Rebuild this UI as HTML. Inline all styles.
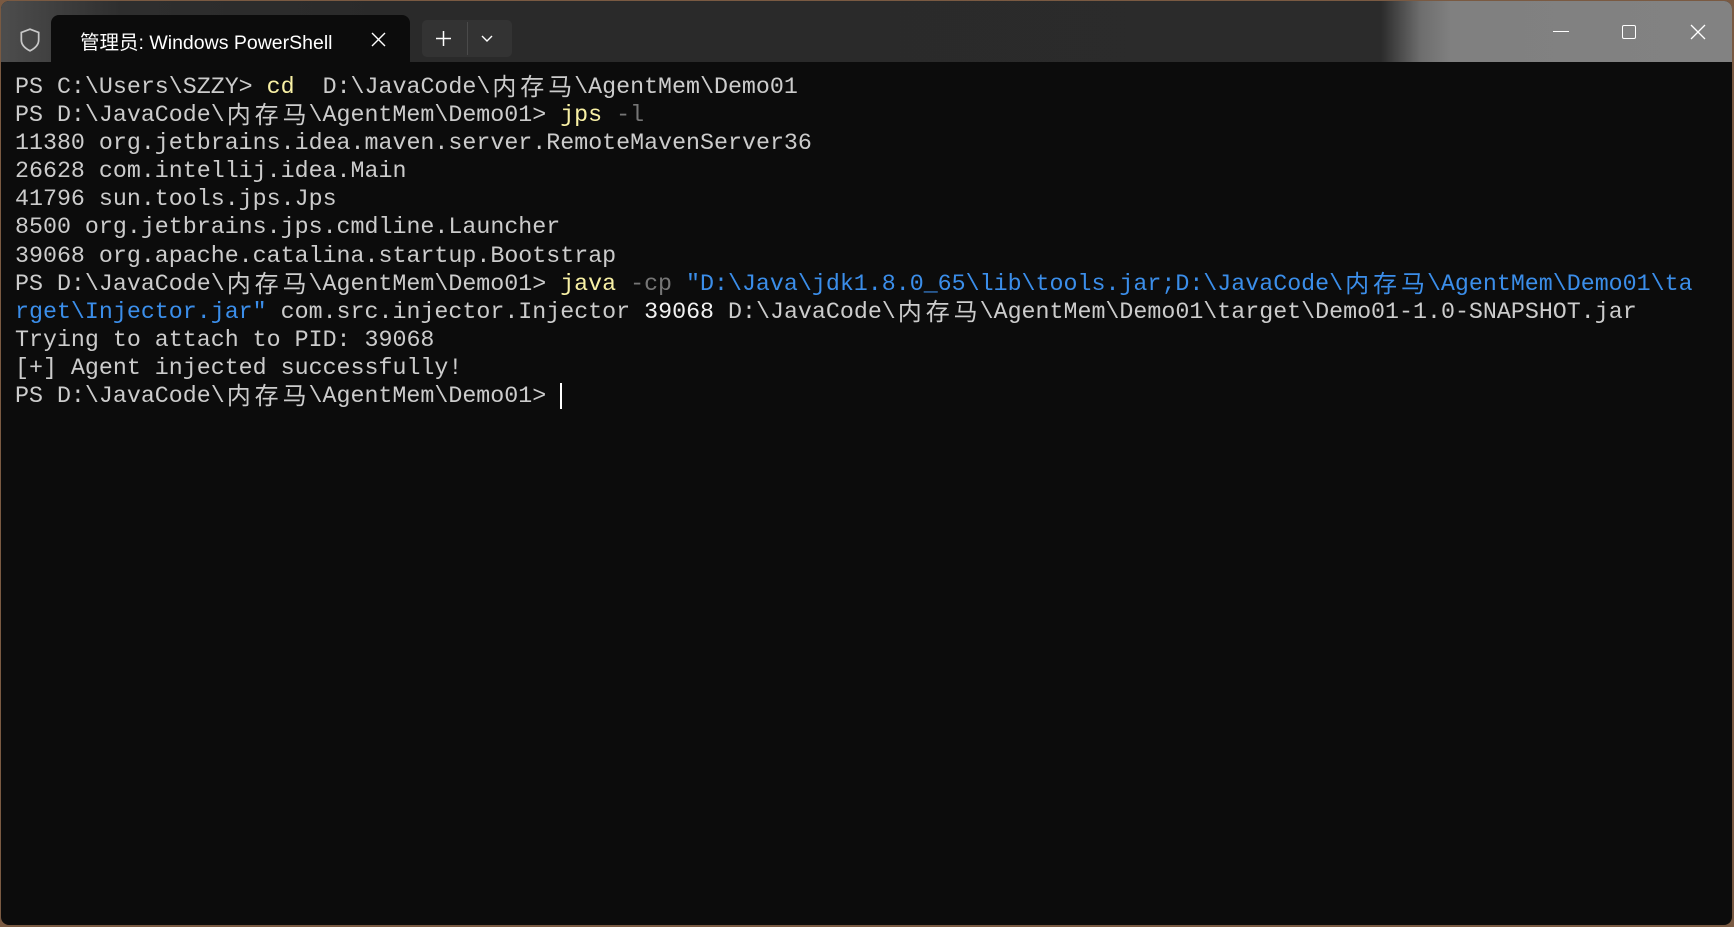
<!DOCTYPE html>
<html><head><meta charset="utf-8"><style>
html,body{margin:0;padding:0;width:1734px;height:927px;overflow:hidden;background:#7a5a42;}
#win{position:absolute;left:1px;top:1px;width:1731px;height:924px;border-radius:8px;overflow:hidden;background:#0c0c0c;}
#title{position:absolute;left:0;top:0;width:100%;height:61px;background:linear-gradient(90deg,#4d4d4d 0px,#2e2e2e 120px,#2a2a2a 400px,#2b2b2b 1380px,#6e6e6e 1420px,#808080 1450px,#828282 100%);}
#tab{position:absolute;left:50px;top:14px;width:359px;height:48px;background:#0c0c0c;border-radius:8px 8px 0 0;}
#tab .t{position:absolute;left:29px;top:11px;color:#fff;font:19.5px "Liberation Sans","Noto Sans CJK SC",sans-serif;}
#btns{position:absolute;left:421px;top:19px;width:90px;height:37px;background:#333;border-radius:5px;}
#term{position:absolute;left:14px;top:72px;font-family:"Liberation Mono",monospace;font-size:23.3px;color:#cccccc;}
#term div{height:28.1px;line-height:28.1px;white-space:pre;}
.c{display:inline-block;width:27.95px;height:28.1px;line-height:24px;vertical-align:top;overflow:visible;text-align:center;font-family:"Noto Sans CJK SC",sans-serif;font-size:24px;}
.y{color:#f9f1a5}.g{color:#767676}.b{color:#3b8eea}.w{color:#f2f2f2}
</style></head><body><div id="win">
<div id="title">
<svg style="position:absolute;left:17px;top:26px" width="24" height="26" viewBox="0 0 22 24"><path d="M11 2 L19 5 V12 C19 17 15 20 11 22 C7 20 3 17 3 12 V5 Z" fill="none" stroke="#c8c8c8" stroke-width="1.6"/></svg>
<div id="tab"><span class="t">管理员: Windows PowerShell</span>
<svg style="position:absolute;left:320px;top:17px" width="15" height="15"><path d="M1 1L14 14M14 1L1 14" stroke="#fff" stroke-width="1.4"/></svg></div>
<div id="btns">
<svg style="position:absolute;left:13px;top:10px" width="17" height="17"><path d="M8.5 1V16M1 8.5H16" stroke="#fff" stroke-width="1.5"/></svg>
<div style="position:absolute;left:45px;top:2px;width:1px;height:33px;background:#4a4a4a"></div>
<svg style="position:absolute;left:59px;top:15px" width="12" height="8"><path d="M1 1L6 6L11 1" fill="none" stroke="#fff" stroke-width="1.4"/></svg>
</div>
<div style="position:absolute;left:1552px;top:30px;width:16px;height:1.3px;background:#fff"></div>
<div style="position:absolute;left:1621px;top:24px;width:12px;height:12px;border:1.3px solid #fff;border-radius:2px"></div>
<svg style="position:absolute;left:1689px;top:23px" width="16" height="16"><path d="M1 1L15 15M15 1L1 15" stroke="#fff" stroke-width="1.3"/></svg>
</div>
<div id="term"><div>PS C:\Users\SZZY&gt; <span class="y">cd</span>  D:\JavaCode\<span class="c">内</span><span class="c">存</span><span class="c">马</span>\AgentMem\Demo01</div><div>PS D:\JavaCode\<span class="c">内</span><span class="c">存</span><span class="c">马</span>\AgentMem\Demo01&gt; <span class="y">jps</span> <span class="g">-l</span></div><div>11380 org.jetbrains.idea.maven.server.RemoteMavenServer36</div><div>26628 com.intellij.idea.Main</div><div>41796 sun.tools.jps.Jps</div><div>8500 org.jetbrains.jps.cmdline.Launcher</div><div>39068 org.apache.catalina.startup.Bootstrap</div><div>PS D:\JavaCode\<span class="c">内</span><span class="c">存</span><span class="c">马</span>\AgentMem\Demo01&gt; <span class="y">java</span> <span class="g">-cp</span> <span class="b">"D:\Java\jdk1.8.0_65\lib\tools.jar;D:\JavaCode\<span class="c">内</span><span class="c">存</span><span class="c">马</span>\AgentMem\Demo01\ta</span></div><div><span class="b">rget\Injector.jar"</span> com.src.injector.Injector <span class="w">39068</span> D:\JavaCode\<span class="c">内</span><span class="c">存</span><span class="c">马</span>\AgentMem\Demo01\target\Demo01-1.0-SNAPSHOT.jar</div><div>Trying to attach to PID: 39068</div><div>[+] Agent injected successfully!</div><div>PS D:\JavaCode\<span class="c">内</span><span class="c">存</span><span class="c">马</span>\AgentMem\Demo01&gt; <span style="display:inline-block;width:1.5px;height:26px;background:#fff;vertical-align:top;margin-top:1px"></span></div></div>
</div></body></html>
